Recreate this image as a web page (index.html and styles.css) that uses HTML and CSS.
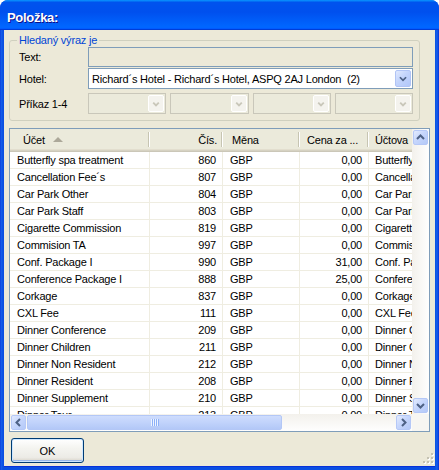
FILE: index.html
```html
<!DOCTYPE html>
<html lang="cs">
<head>
<meta charset="utf-8">
<title>Položka</title>
<link rel="stylesheet" href="styles.css">
</head>
<body>
<div class="window">
  <div class="titlebar"><span class="title">Položka:</span></div>
  <div class="client">
    <fieldset class="group">
      <legend>Hledaný výraz je</legend>
      <div class="frow r1"><span class="lbl">Text:</span><div class="textbox"></div></div>
      <div class="frow r2"><span class="lbl">Hotel:</span>
        <div class="combo">
          <span class="value">Richard´s Hotel - Richard´s Hotel, ASPQ 2AJ London&nbsp; (2)</span>
          <span class="ddbtn"><svg width="16" height="18" viewBox="0 0 16 18"><polyline points="4.5,7 8,10.5 11.5,7" fill="none" stroke="#4d6185" stroke-width="2"/></svg></span>
        </div>
      </div>
      <div class="frow r3"><span class="lbl">Příkaz 1-4</span>
        <div class="combos">
          <div class="combo disabled"><span class="value"></span><span class="ddbtn"><svg width="15" height="18" viewBox="0 0 15 18"><polyline points="4.5,7.5 7.5,10.5 10.5,7.5" fill="none" stroke="#c9c7ba" stroke-width="2"/></svg></span></div>
          <div class="combo disabled"><span class="value"></span><span class="ddbtn"><svg width="15" height="18" viewBox="0 0 15 18"><polyline points="4.5,7.5 7.5,10.5 10.5,7.5" fill="none" stroke="#c9c7ba" stroke-width="2"/></svg></span></div>
          <div class="combo disabled"><span class="value"></span><span class="ddbtn"><svg width="15" height="18" viewBox="0 0 15 18"><polyline points="4.5,7.5 7.5,10.5 10.5,7.5" fill="none" stroke="#c9c7ba" stroke-width="2"/></svg></span></div>
          <div class="combo disabled"><span class="value"></span><span class="ddbtn"><svg width="15" height="18" viewBox="0 0 15 18"><polyline points="4.5,7.5 7.5,10.5 10.5,7.5" fill="none" stroke="#c9c7ba" stroke-width="2"/></svg></span></div>
        </div>
      </div>
    </fieldset>

    <div class="list">
      <div class="viewport">
        <div class="hdr">
          <div class="hc c1">Účet<span class="sort"></span></div>
          <div class="hc c2 num">Čís.</div>
          <div class="hc c3">Měna</div>
          <div class="hc c4">Cena za ...</div>
          <div class="hc c5">Účtova</div>
        </div>
        <div class="row"><span>Butterfly spa treatment</span><span class="num">860</span><span>GBP</span><span class="num">0,00</span><span>Butterfly spa treatment</span></div>
        <div class="row"><span>Cancellation Fee´s</span><span class="num">807</span><span>GBP</span><span class="num">0,00</span><span>Cancellation Fee´s</span></div>
        <div class="row"><span>Car Park Other</span><span class="num">804</span><span>GBP</span><span class="num">0,00</span><span>Car Park Other</span></div>
        <div class="row"><span>Car Park Staff</span><span class="num">803</span><span>GBP</span><span class="num">0,00</span><span>Car Park Staff</span></div>
        <div class="row"><span>Cigarette Commission</span><span class="num">819</span><span>GBP</span><span class="num">0,00</span><span>Cigarette Commission</span></div>
        <div class="row"><span>Commision TA</span><span class="num">997</span><span>GBP</span><span class="num">0,00</span><span>Commision TA</span></div>
        <div class="row"><span>Conf. Package I</span><span class="num">990</span><span>GBP</span><span class="num">31,00</span><span>Conf. Package I</span></div>
        <div class="row"><span>Conference Package I</span><span class="num">888</span><span>GBP</span><span class="num">25,00</span><span>Conference Package I</span></div>
        <div class="row"><span>Corkage</span><span class="num">837</span><span>GBP</span><span class="num">0,00</span><span>Corkage</span></div>
        <div class="row"><span>CXL Fee</span><span class="num">111</span><span>GBP</span><span class="num">0,00</span><span>CXL Fee</span></div>
        <div class="row"><span>Dinner Conference</span><span class="num">209</span><span>GBP</span><span class="num">0,00</span><span>Dinner Conference</span></div>
        <div class="row"><span>Dinner Children</span><span class="num">211</span><span>GBP</span><span class="num">0,00</span><span>Dinner Children</span></div>
        <div class="row"><span>Dinner Non Resident</span><span class="num">212</span><span>GBP</span><span class="num">0,00</span><span>Dinner Non Resident</span></div>
        <div class="row"><span>Dinner Resident</span><span class="num">208</span><span>GBP</span><span class="num">0,00</span><span>Dinner Resident</span></div>
        <div class="row"><span>Dinner Supplement</span><span class="num">210</span><span>GBP</span><span class="num">0,00</span><span>Dinner Supplement</span></div>
        <div class="row"><span>Dinner Tour</span><span class="num">213</span><span>GBP</span><span class="num">0,00</span><span>Dinner Tour</span></div>
      </div>
      <div class="vscroll">
        <span class="sbtn"><svg width="15" height="15" viewBox="0 0 15 15"><polyline points="4,9 7.5,5.5 11,9" fill="none" stroke="#4d6185" stroke-width="2"/></svg></span>
        <span class="vtrack"></span>
        <span class="sbtn"><svg width="15" height="15" viewBox="0 0 15 15"><polyline points="4,6 7.5,9.5 11,6" fill="none" stroke="#4d6185" stroke-width="2"/></svg></span>
      </div>
      <div class="hscroll">
        <span class="sbtn"><svg width="15" height="15" viewBox="0 0 15 15"><polyline points="9,4 5.5,7.5 9,11" fill="none" stroke="#4d6185" stroke-width="2"/></svg></span>
        <span class="htrack"><span class="hthumb"><span class="grip"></span></span></span>
        <span class="sbtn"><svg width="15" height="15" viewBox="0 0 15 15"><polyline points="6,4 9.5,7.5 6,11" fill="none" stroke="#4d6185" stroke-width="2"/></svg></span>
      </div>
      <div class="corner"></div>
    </div>

    <div class="footer">
      <button class="btn" type="button">OK</button>
      <svg class="sizegrip" width="12" height="12" viewBox="0 0 12 12">
        <g fill="#fff">
          <rect x="10" y="1" width="2" height="2"/>
          <rect x="6" y="5" width="2" height="2"/><rect x="10" y="5" width="2" height="2"/>
          <rect x="2" y="9" width="2" height="2"/><rect x="6" y="9" width="2" height="2"/><rect x="10" y="9" width="2" height="2"/>
        </g>
        <g fill="#c5c2b2">
          <rect x="9" y="0" width="2" height="2"/>
          <rect x="5" y="4" width="2" height="2"/><rect x="9" y="4" width="2" height="2"/>
          <rect x="1" y="8" width="2" height="2"/><rect x="5" y="8" width="2" height="2"/><rect x="9" y="8" width="2" height="2"/>
        </g>
      </svg>
    </div>
  </div>
</div>
</body>
</html>
```

FILE: styles.css
```css
html, body {
  margin: 0;
  padding: 0;
  background: #fff;
}

body {
  font-family: "Liberation Sans", Arial, sans-serif;
  font-size: 11px;
  letter-spacing: -0.2px;
  color: #000;
}

.window {
  width: 439px;
  height: 470px;
  box-sizing: border-box;
  display: flex;
  flex-direction: column;
  background: linear-gradient(to right, #0831d9 0, #1660ea 1px, #0a4fe2 3px, #0a4fe2 435px, #1660ea 437px, #0831d9 439px);
  border-radius: 8px 8px 0 0;
  overflow: hidden;
}

.titlebar {
  height: 30px;
  flex: none;
  box-sizing: border-box;
  padding: 10px 0 0 7px;
  background: linear-gradient(180deg, #0997ff, #0053ee 8%, #0050ee 40%, #06f 88%, #06f 93%, #005bff 95%, #003dd7 96%, #003dd7);
}

.title {
  display: block;
  color: #fff;
  font-weight: bold;
  font-size: 13px;
  line-height: 16px;
  letter-spacing: -0.3px;
  text-shadow: 1px 1px #0f1089;
}

.client {
  flex: 1;
  margin: 0 4px 4px;
  background: #ece9d8;
  padding: 4px 5px 0;
  display: flex;
  flex-direction: column;
  box-shadow: 0 1px 0 #0831d9;
}

.group {
  margin: 0 10px 0 0;
  padding: 0 6px 6px 9px;
  border: 1px solid #d0d0bf;
  border-radius: 3px;
  min-width: 0;
}

.group legend {
  margin-left: -2px;
  padding: 0 2px;
  color: #0046d5;
  line-height: 13px;
}

.frow {
  display: flex;
  align-items: center;
}

.r1 { height: 20px; }
.r2 { height: 21px; margin-top: 1px; }
.r3 { height: 21px; margin-top: 4px; }

.lbl {
  width: 69px;
  flex: none;
}

.textbox {
  flex: 1;
  height: 20px;
  box-sizing: border-box;
  border: 1px solid #7f9db9;
  background: #ece9d8;
}

.combo {
  flex: 1;
  height: 21px;
  box-sizing: border-box;
  border: 1px solid #7f9db9;
  background: #fff;
  display: flex;
  align-items: center;
  padding: 0 1px 0 3px;
  overflow: hidden;
}

.combo .value {
  flex: 1;
  white-space: nowrap;
  overflow: hidden;
}

.combo .ddbtn {
  flex: none;
  width: 16px;
  height: 17px;
  box-sizing: border-box;
  border: 1px solid #b1c4f5;
  border-radius: 2px;
  background: linear-gradient(135deg, #e0e9fe 0, #c3d4fc 45%, #b2c7f9 100%);
  display: flex;
  align-items: center;
  justify-content: center;
}

.combo .ddbtn svg { display: block; }

.combos {
  flex: 1;
  display: flex;
  gap: 4px;
}

.combo.disabled {
  border-color: #c9c7ba;
  background: #ebeadb;
}

.combo.disabled .ddbtn {
  width: 16px;
  border: 1px solid #fff;
  background: #f4f3ee;
}

/* List view */
.list {
  margin-top: 7px;
  height: 304px;
  box-sizing: border-box;
  border: 1px solid #7f9db9;
  background: #fff;
  display: grid;
  grid-template-columns: 1fr 17px;
  grid-template-rows: 1fr 17px;
  overflow: hidden;
}

.viewport {
  overflow: hidden;
  min-width: 0;
  min-height: 0;
}

.hdr, .row {
  display: grid;
  grid-template-columns: 140px 73px 77px 69px 140px;
  width: 499px;
}

.hdr {
  height: 23px;
  background: linear-gradient(to bottom, #ebeadb 0 20px, #e2dece 20px 21px, #d6d2c2 21px 22px, #cbc7b8 22px 23px);
}

.hc {
  position: relative;
  display: flex;
  align-items: center;
  height: 20px;
  padding-top: 1px;
  box-sizing: border-box;
  white-space: nowrap;
}

.hc::after {
  content: "";
  position: absolute;
  right: 1px;
  top: 3px;
  bottom: 2px;
  width: 1px;
  background: #c7c5b2;
  box-shadow: 1px 0 0 #fff;
}

.hc.c1 { padding-left: 13px; }
.hc.c2 { justify-content: flex-end; padding-right: 6px; }
.hc.c3 { padding-left: 9px; }
.hc.c4 { padding-left: 7px; }
.hc.c5 { padding-left: 6px; }

.sort {
  width: 0;
  height: 0;
  margin-left: 8px;
  margin-top: -1px;
  border-left: 5px solid transparent;
  border-right: 5px solid transparent;
  border-bottom: 5px solid #aca899;
}

.row span {
  height: 17px;
  line-height: 16px;
  box-sizing: border-box;
  border-right: 1px solid #efede1;
  border-bottom: 1px solid #efede1;
  padding: 0 6px 0 7px;
  white-space: nowrap;
  overflow: hidden;
}

.row span:nth-child(5) { padding-left: 6px; }

.row span.num {
  text-align: right;
  padding: 0 6px 0 0;
}

/* Scrollbars */
.vscroll {
  display: flex;
  flex-direction: column;
  align-items: center;
  background: linear-gradient(to right, #f3f1ec, #fefefe);
  padding: 1px 0;
}

.vtrack { flex: 1; }

.hscroll {
  display: flex;
  align-items: center;
  background: linear-gradient(to bottom, #f3f1ec, #fefefe);
  padding: 0 1px;
}

.htrack {
  flex: 1;
  height: 15px;
  padding-left: 1px;
  display: flex;
}

.hthumb {
  width: 255px;
  height: 15px;
  box-sizing: border-box;
  border: 1px solid #b3c7f6;
  border-radius: 2px;
  background: linear-gradient(to bottom, #cedcfd, #c1d3fb 50%, #b3c8f7);
  display: flex;
  align-items: center;
  justify-content: center;
}

.grip {
  width: 8px;
  height: 7px;
  background: repeating-linear-gradient(to right, #eef4fe 0 1px, #8cb0f8 1px 2px);
}

.sbtn {
  width: 15px;
  height: 15px;
  box-sizing: border-box;
  border: 1px solid #b5c8f7;
  border-radius: 2px;
  background: linear-gradient(135deg, #e3ebfe 0, #c6d6fc 45%, #b4c9f8 100%);
  display: flex;
  align-items: center;
  justify-content: center;
  flex: none;
}

.sbtn svg { display: block; margin: -1px; }

.corner {
  background: #f7f6f2;
}

/* Footer */
.footer {
  margin-top: 6px;
  flex: 1;
  display: flex;
  justify-content: space-between;
  align-items: flex-start;
}

.btn {
  margin-left: 2px;
  width: 73px;
  height: 25px;
  border: 1px solid #003c74;
  border-radius: 3px;
  background: linear-gradient(to bottom, #fff 0, #f4f4f0 40%, #ecebe6 80%, #d6d0c5 100%);
  box-shadow: inset 0 0 0 1px #cee7ff, inset 0 -1px 0 1px #98b8ea;
  font-family: "Liberation Sans", Arial, sans-serif;
  font-size: 11px;
  color: #000;
  padding: 0;
}

.sizegrip {
  align-self: flex-end;
  margin: 0 -4px 1px 0;
}
```
